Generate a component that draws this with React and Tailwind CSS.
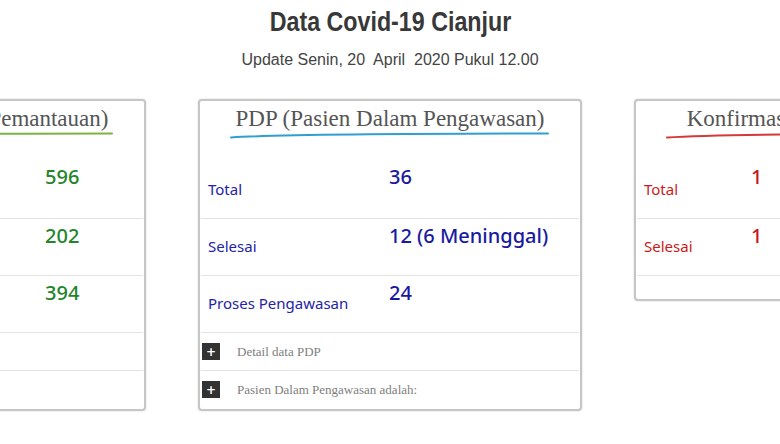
import React from "react";

// Kartu ringkasan data Covid-19 Cianjur
const cards = [
  {
    title: "ODP (Orang Dalam Pemantauan)",
    line: "#7cb342",
    labelColor: "text-[#2e7d32]",
    valueColor: "text-[#23852a]",
    labelW: "w-[280px]",
    rows: [
      ["Total", "596"],
      ["Selesai", "202"],
      ["Proses Pemantauan", "394"],
    ],
    details: ["Detail data ODP", "Orang Dalam Pemantauan adalah:"],
  },
  {
    title: "PDP (Pasien Dalam Pengawasan)",
    line: "#2f9fd0",
    labelColor: "text-[#2323a8]",
    valueColor: "text-[#1a1aa0]",
    labelW: "w-[188px]",
    rows: [
      ["Total", "36"],
      ["Selesai", "12 (6 Meninggal)"],
      ["Proses Pengawasan", "24"],
    ],
    details: ["Detail data PDP", "Pasien Dalam Pengawasan adalah:"],
  },
  {
    title: "Konfirmasi (Positif Covid-19)",
    line: "#d43a3a",
    labelColor: "text-[#cc1a1a]",
    valueColor: "text-[#c81818]",
    labelW: "w-[114px]",
    rows: [
      ["Total", "1"],
      ["Selesai", "1"],
    ],
    details: [],
    empty: true,
  },
];

function Underline({ color }) {
  return (
    <svg
      className="block h-[7px] self-stretch -mx-[3px]"
      viewBox="0 0 320 7"
      preserveAspectRatio="none"
    >
      <path
        d="M1 5.5 Q 60 1.6 318 1.4"
        stroke={color}
        strokeWidth="2"
        strokeLinecap="round"
        fill="none"
      />
    </svg>
  );
}

function Card({ card }) {
  return (
    <div className="w-[384px] shrink-0 self-start rounded-[4px] border-2 border-[#c6c6c6] bg-white px-[1px] pb-[1px] shadow-[0_0_2px_rgba(0,0,0,0.18)]">
      <div className="flex h-[58px] justify-center pt-[4px]">
        <div className="inline-flex flex-col items-center">
          <div className="whitespace-nowrap font-['Liberation_Serif',serif] text-[23px] leading-[27px] text-[#555555]">
            {card.title}
          </div>
          <Underline color={card.line} />
        </div>
      </div>

      {card.rows.map(([label, value], i) => (
        <div
          key={label}
          className={
            "flex border-t font-['Noto_Sans',sans-serif] " +
            (i === 0 ? "h-[59px] border-transparent" : "h-[57px] border-[#e2e2e2]")
          }
        >
          <div className={"shrink-0 self-end pb-[20px] pl-[7px] text-[15px] leading-[18px] whitespace-nowrap " + card.labelW + " " + card.labelColor}>
            {label}
          </div>
          <div className={"pt-[5px] text-[20px] font-medium leading-[24px] whitespace-nowrap " + card.valueColor}>
            {value}
          </div>
        </div>
      ))}

      {card.details.map((d) => (
        <div key={d} className="flex h-[38px] items-center border-t border-[#e2e2e2]">
          <div className="ml-[1px] flex h-[17px] w-[18px] items-center justify-center bg-[#333333] font-['DejaVu_Sans',sans-serif] text-[12px] font-bold leading-none text-white">
            +
          </div>
          <div className="ml-[17px] whitespace-nowrap font-['Liberation_Serif',serif] text-[13px] text-[#808080]">
            {d}
          </div>
        </div>
      ))}

      {card.empty && <div className="h-[23px] border-t border-[#e2e2e2]" />}
    </div>
  );
}

export default function App() {
  return (
    <div className="h-[444px] w-[780px] overflow-hidden bg-white">
      <div className="flex flex-col items-center">
        <h1 className="pt-[5px] font-['Liberation_Sans',sans-serif] text-[28px] font-bold leading-[34px] text-[#383838] scale-x-[0.83]">
          Data Covid-19 Cianjur
        </h1>
        <p className="mt-[10px] whitespace-pre font-['Liberation_Sans',sans-serif] text-[16px] leading-[22px] text-[#444444]">
          {"Update Senin, 20  April  2020 Pukul 12.00"}
        </p>
      </div>

      <div className="mt-[28px] flex justify-center gap-[52px]">
        {cards.map((c) => (
          <Card key={c.title} card={c} />
        ))}
      </div>
    </div>
  );
}
